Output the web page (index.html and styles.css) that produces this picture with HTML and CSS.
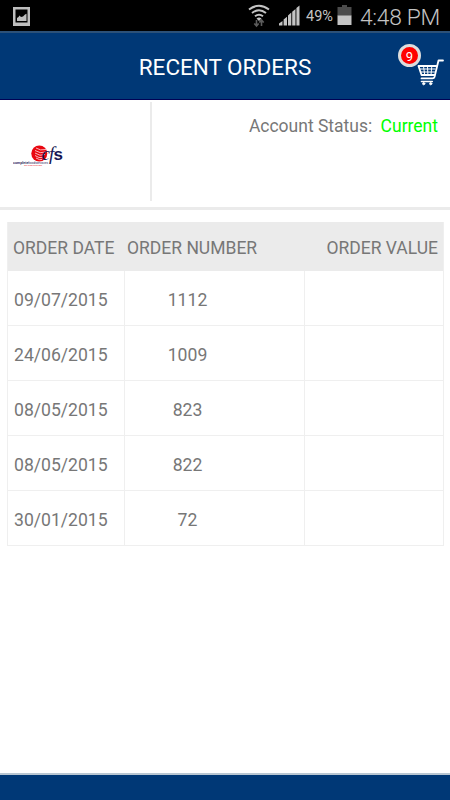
FILE: index.html
```html
<!DOCTYPE html>
<html lang="en">
<head>
<meta charset="utf-8">
<title>Recent Orders</title>
<link rel="stylesheet" href="styles.css">
</head>
<body>
<div class="status-bar">
  <svg class="gallery" width="17" height="19" viewBox="0 0 17 19"><path fill="#bebebe" fill-rule="evenodd" d="M0 0h17v19H0zM2.500 2.500v13h12v-13z"/><path fill="#bebebe" d="M4 14v-3l1.500-1 1-1.500 1.500 1.500 2-.5 2-2 1.500-.8V14z"/></svg>
  <svg class="wifi" width="22" height="24" viewBox="0 0 22 24" fill="none" stroke="#c4c4c4" stroke-width="2"><path d="M1 5.500Q11-2 21 5.500M4 9q7-5.500 14 0M7 12.300q4-3.200 8 0"/><path fill="#c4c4c4" stroke="none" d="M8.500 14.500q2.500-2 5 0L11 17z"/><path stroke="#5c5c5c" stroke-width="1.600" d="M8.500 16v6M6.300 19.500l2.200 2.500 2.200-2.500M13.500 22v-6M11.300 18.500l2.200-2.500 2.200 2.500"/></svg>
  <svg class="signal" width="21" height="21" viewBox="0 0 21 21" fill="#c4c4c4"><path d="M0 20.500v-2L3.500 16v4.500zM4.600 20.500v-6l3.400-2.800v8.800zM9 20.500v-10l3.300-2.900v12.900zM13.200 20.500V6.800l3.300-2.900v16.600zM17.400 20.500V3L20.500.5v20z"/></svg>
  <span class="percent">49%</span>
  <svg class="battery" width="15" height="20" viewBox="0 0 15 20"><path fill="#4b4b4b" d="M5 0h5v2h4.500v9H.5V2H5z"/><path fill="#c4c4c4" d="M.5 10.500h14V20H.5z"/></svg>
  <span class="clock">4:48 PM</span>
</div>
<header class="title-bar">
  <h1>RECENT ORDERS</h1>
  <span class="badge">9</span>
  <svg class="cart" width="28" height="28" viewBox="0 0 28 28" fill="none" stroke="#fff" stroke-linecap="round" stroke-linejoin="round"><path stroke-width="1.800" d="M26 1.500h-4.500L17.500 18q-.4 1.400-2 1.400H4.500M19 7H1.500l3 9h12.500"/><path stroke-width="1" d="M3 10h15M4 13h13.500M6.500 7l1.200 9M10.500 7l.4 9M14.800 7l-.8 9"/><path stroke-width="1.600" d="M4.500 22.500h10.800"/><circle cx="6.700" cy="24.700" r="1.100" fill="#fff"/><circle cx="13.700" cy="24.700" r="1.100" fill="#fff"/></svg>
</header>
<section class="account">
  <div class="brand">
    <svg width="56" height="28" viewBox="0 -4 56 28">
      <circle cx="26.300" cy="9.500" r="8" fill="#e90710"/>
      <path fill="none" stroke="#fff" stroke-width=".7" d="M23 4q4 3 10 1.500M22 6.500q5 3.500 11 1.500M22 9q5 3.700 10 1.500M22 11.500q4 3 8 2M23 14q4 2.500 6 1.500"/>
      <text y="15.500" class="logo"><tspan x="28.500" class="logo-c">c</tspan><tspan x="36" class="logo-f">f</tspan><tspan x="40.500" class="logo-s">s</tspan></text>
      <text x="0" y="19.500" class="logo-name" textLength="35" lengthAdjust="spacingAndGlyphs"><tspan class="bold">complete</tspan>foodservices</text>
      <text x="11" y="22.300" class="logo-tag" textLength="18" lengthAdjust="spacingAndGlyphs">The fresh approach</text>
    </svg>
  </div>
  <p class="account-status">Account Status: <span>Current</span></p>
</section>
<main>
  <table>
    <thead><tr><th class="date">ORDER DATE</th><th class="number">ORDER NUMBER</th><th class="value">ORDER VALUE</th></tr></thead>
    <tbody>
      <tr><td>09/07/2015</td><td>1112</td><td></td></tr>
      <tr><td>24/06/2015</td><td>1009</td><td></td></tr>
      <tr><td>08/05/2015</td><td>823</td><td></td></tr>
      <tr><td>08/05/2015</td><td>822</td><td></td></tr>
      <tr><td>30/01/2015</td><td>72</td><td></td></tr>
    </tbody>
  </table>
</main>
<footer></footer>
</body>
</html>
```
FILE: styles.css
```css
* { box-sizing: border-box; }
body {
  margin: 0;
  height: 800px;
  display: flex;
  flex-direction: column;
  overflow: hidden;
  background: #fff;
  color: #777;
  font-family: Roboto, "Liberation Sans", sans-serif;
}
.status-bar {
  height: 31px;
  flex: none;
  display: flex;
  align-items: flex-start;
  padding: 0 0 0 13px;
  background: #000;
  color: #c4c4c4;
}
.status-bar > * { flex: none; }
.gallery { margin-top: 7px; }
.wifi { margin: 4px 0 0 218px; }
.signal { margin: 5px 0 0 9px; }
.percent { margin: 8px 0 0 6px; width: 31px; font-size: 14.500px; line-height: 18px; }
.battery { margin-top: 5px; }
.clock { margin: 3px 0 0 8px; font-size: 22.800px; font-weight: 300; letter-spacing: -.3px; line-height: 29px; white-space: nowrap; }
.title-bar {
  position: relative;
  height: 69px;
  flex: none;
  background: #003876;
  border-top: 2px solid #2c5178;
  border-bottom: 1px solid #000255;
}
h1 {
  margin: 0;
  text-align: center;
  font-size: 22.500px;
  font-weight: 400;
  line-height: 69px;
  color: #fff;
}
.badge {
  position: absolute;
  left: 398px;
  top: 11px;
  width: 23px;
  height: 23px;
  border: 3px solid #ddd;
  border-radius: 50%;
  background: #f00;
  color: #fff;
  font-size: 13px;
  line-height: 19px;
  text-align: center;
}
.cart { position: absolute; left: 417px; top: 26px; }
.account {
  height: 110px;
  flex: none;
  display: flex;
  justify-content: space-between;
  padding: 2px 12px 6px 0;
  border-bottom: 3px solid #ebebeb;
}
.brand { width: 152px; height: 99px; padding: 38px 0 0 13px; border-right: 2px solid #ebebeb; }
.brand svg { display: block; }
.logo { fill: #171755; }
.logo-c { font: italic 19px "Liberation Serif", serif; }
.logo-f { font: italic 19px "Liberation Serif", serif; }
.logo-s { font: bold 17px "Liberation Sans", sans-serif; }
.logo-name { font: 3.600px "Liberation Sans", sans-serif; fill: #171755; }
.bold { font-weight: 700; }
.logo-tag { font: 2.500px "Liberation Sans", sans-serif; fill: #e90710; }
.account-status { margin: 13px 0 0; font-size: 17.500px; line-height: 22px; }
.account-status span { margin-left: 4px; color: #0f0; }
main { flex: 1; padding: 12px 7px 0; }
table {
  width: 437px;
  border-collapse: separate;
  border-spacing: 0;
  table-layout: fixed;
  border-left: 1px solid #efefef;
  border-right: 1px solid #efefef;
}
th {
  height: 49px;
  padding: 2px 5px 0;
  background: #ebebeb;
  font-size: 17.500px;
  font-weight: 400;
  text-align: left;
  white-space: nowrap;
}
.date { width: 117px; }
.number { width: 180px; padding-left: 2px; }
.value { text-align: right; }
td {
  height: 55px;
  padding: 3px 0 0 6px;
  border-bottom: 1px solid #efefef;
  border-right: 1px solid #efefef;
  font-size: 17.600px;
}
td:nth-child(2) { padding: 3px 54px 0 0; text-align: center; }
td:last-child { border-right: 0; }
footer { height: 27px; flex: none; background: #003876; border-top: 2px solid #b8c6d2; }
```
